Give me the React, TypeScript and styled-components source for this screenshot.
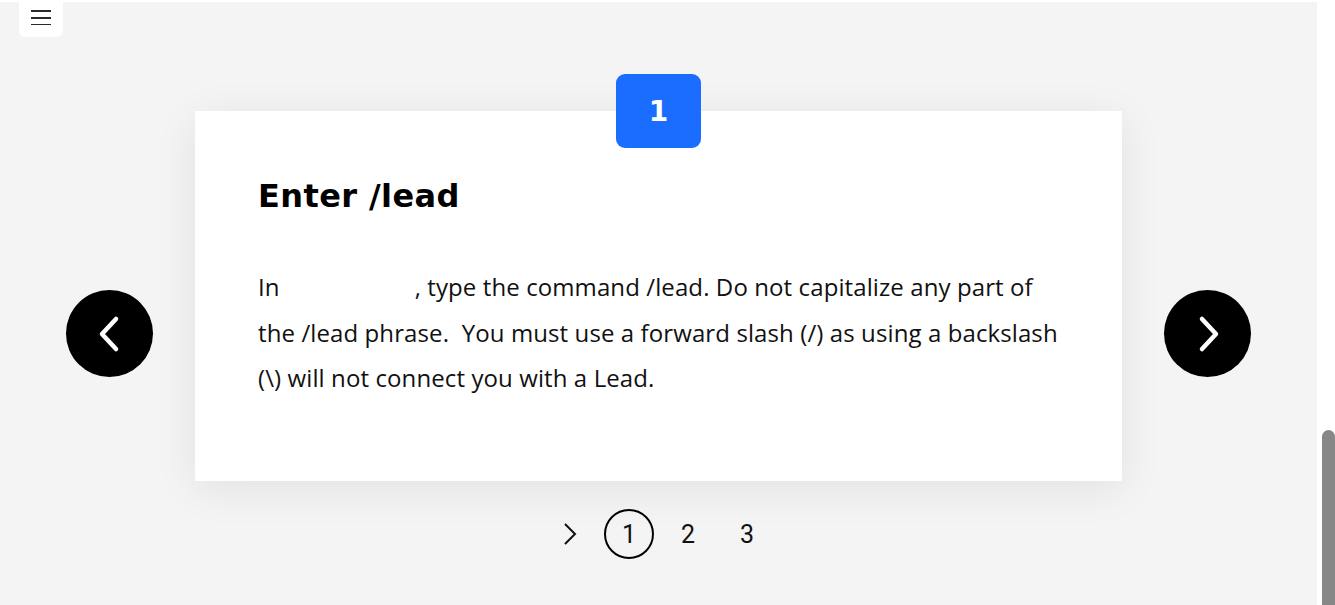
import React from "react";
import styled, { createGlobalStyle } from "styled-components";

const Global = createGlobalStyle`
  html, body { margin: 0; padding: 0; height: 100%; overflow: hidden; }
  body { background: #ffffff; font-family: "Open Sans", "Noto Sans", sans-serif; }
  * { box-sizing: border-box; }
`;

const Root = styled.div`
  display: flex;
  width: 1335px;
  height: 605px;
  background: #ffffff;
`;

const Main = styled.main`
  flex: 1;
  margin-top: 2px;
  background: #f4f4f4;
  display: flex;
  flex-direction: column;
`;

const Header = styled.header`
  height: 35px;
  display: flex;
  padding-left: 19px;
`;

const MenuButton = styled.button`
  width: 44px;
  height: 35px;
  border: none;
  background: #ffffff;
  border-radius: 0 0 6px 6px;
  display: flex;
  align-items: center;
  justify-content: center;
  padding: 0 0 6px 0;
  cursor: pointer;
`;

const Stage = styled.section`
  margin-top: 37px;
  display: flex;
  justify-content: center;
  align-items: flex-start;
  gap: 42px;
`;

const NavButton = styled.button`
  width: 87px;
  height: 87px;
  margin-top: 216px;
  border-radius: 50%;
  border: none;
  background: #000000;
  display: flex;
  align-items: center;
  justify-content: center;
  padding: 0;
  cursor: pointer;
  flex-shrink: 0;
`;

const CardColumn = styled.div`
  display: flex;
  flex-direction: column;
  align-items: center;
  width: 927px;
`;

const Badge = styled.div`
  position: relative;
  z-index: 1;
  width: 85px;
  height: 74px;
  margin-bottom: -37px;
  border-radius: 9px;
  background: #1a6dff;
  color: #ffffff;
  font-family: "DejaVu Sans", sans-serif;
  font-weight: 700;
  font-size: 28px;
  display: flex;
  align-items: center;
  justify-content: center;
`;

const Card = styled.article`
  width: 927px;
  height: 370px;
  background: #ffffff;
  box-shadow: 0 8px 40px rgba(0, 0, 0, 0.08);
  padding: 61px 63px 0 63px;
`;

const Title = styled.h2`
  margin: 0;
  font-family: "DejaVu Sans", sans-serif;
  font-size: 32px;
  font-weight: 700;
  letter-spacing: 0.4px;
  line-height: 49px;
  color: #000000;
`;

const Body = styled.p`
  margin: 43px 0 0 0;
  font-size: 24px;
  letter-spacing: 0.1px;
  line-height: 45.5px;
  color: #111111;
`;

const Hidden = styled.span`
  display: inline-block;
  width: 135px;
  height: 1px;
`;

const Pager = styled.nav`
  margin-top: 28px;
  display: flex;
  justify-content: center;
  gap: 9px;
`;

const PageItem = styled.button<{ $active?: boolean }>`
  width: 50px;
  height: 50px;
  border-radius: 50%;
  border: ${(p) => (p.$active ? "2px solid #000" : "2px solid transparent")};
  background: transparent;
  display: flex;
  align-items: center;
  justify-content: center;
  padding: 0;
  font-family: "Roboto", "Inter", sans-serif;
  font-size: 25px;
  color: #111111;
  cursor: pointer;
`;

const ScrollTrack = styled.div`
  width: 18px;
  background: #ffffff;
  display: flex;
  flex-direction: column;
  justify-content: flex-end;
  align-items: flex-end;
`;

const ScrollThumb = styled.div`
  width: 13px;
  height: 175px;
  border-radius: 7px 7px 0 0;
  background: #878787;
`;

const Chevron = ({ dir }: { dir: "left" | "right" }) => (
  <svg width="30" height="40" viewBox="0 0 30 40" fill="none">
    <path
      d={dir === "left" ? "M21 5 L7 20 L21 35" : "M9 5 L23 20 L9 35"}
      stroke="#fff"
      strokeWidth="4.5"
      strokeLinecap="round"
      strokeLinejoin="round"
    />
  </svg>
);

export default function App() {
  return (
    <>
      <Global />
      <Root>
        <Main>
          <Header>
            <MenuButton aria-label="Menu">
              <svg width="20" height="16" viewBox="0 0 20 16">
                <g stroke="#111" strokeWidth="1.8">
                  <line x1="0" y1="2" x2="20" y2="2" />
                  <line x1="0" y1="9" x2="20" y2="9" />
                  <line x1="0" y1="16" x2="20" y2="16" />
                </g>
              </svg>
            </MenuButton>
          </Header>
          <Stage>
            <NavButton aria-label="Previous">
              <Chevron dir="left" />
            </NavButton>
            <CardColumn>
              <Badge>1</Badge>
              <Card>
                <Title>Enter /lead</Title>
                <Body>
                  In<Hidden />, type the command /lead. Do not capitalize any part of the /lead phrase.&nbsp; You must use a forward slash (/) as using a backslash (\) will not connect you with a Lead.
                </Body>
              </Card>
              <Pager>
                <PageItem aria-label="Next page">
                  <svg width="14" height="22" viewBox="0 0 14 22" fill="none">
                    <path d="M2 1 L12 11 L2 21" stroke="#111" strokeWidth="2" />
                  </svg>
                </PageItem>
                <PageItem $active>1</PageItem>
                <PageItem>2</PageItem>
                <PageItem>3</PageItem>
              </Pager>
            </CardColumn>
            <NavButton aria-label="Next">
              <Chevron dir="right" />
            </NavButton>
          </Stage>
        </Main>
        <ScrollTrack>
          <ScrollThumb />
        </ScrollTrack>
      </Root>
    </>
  );
}
